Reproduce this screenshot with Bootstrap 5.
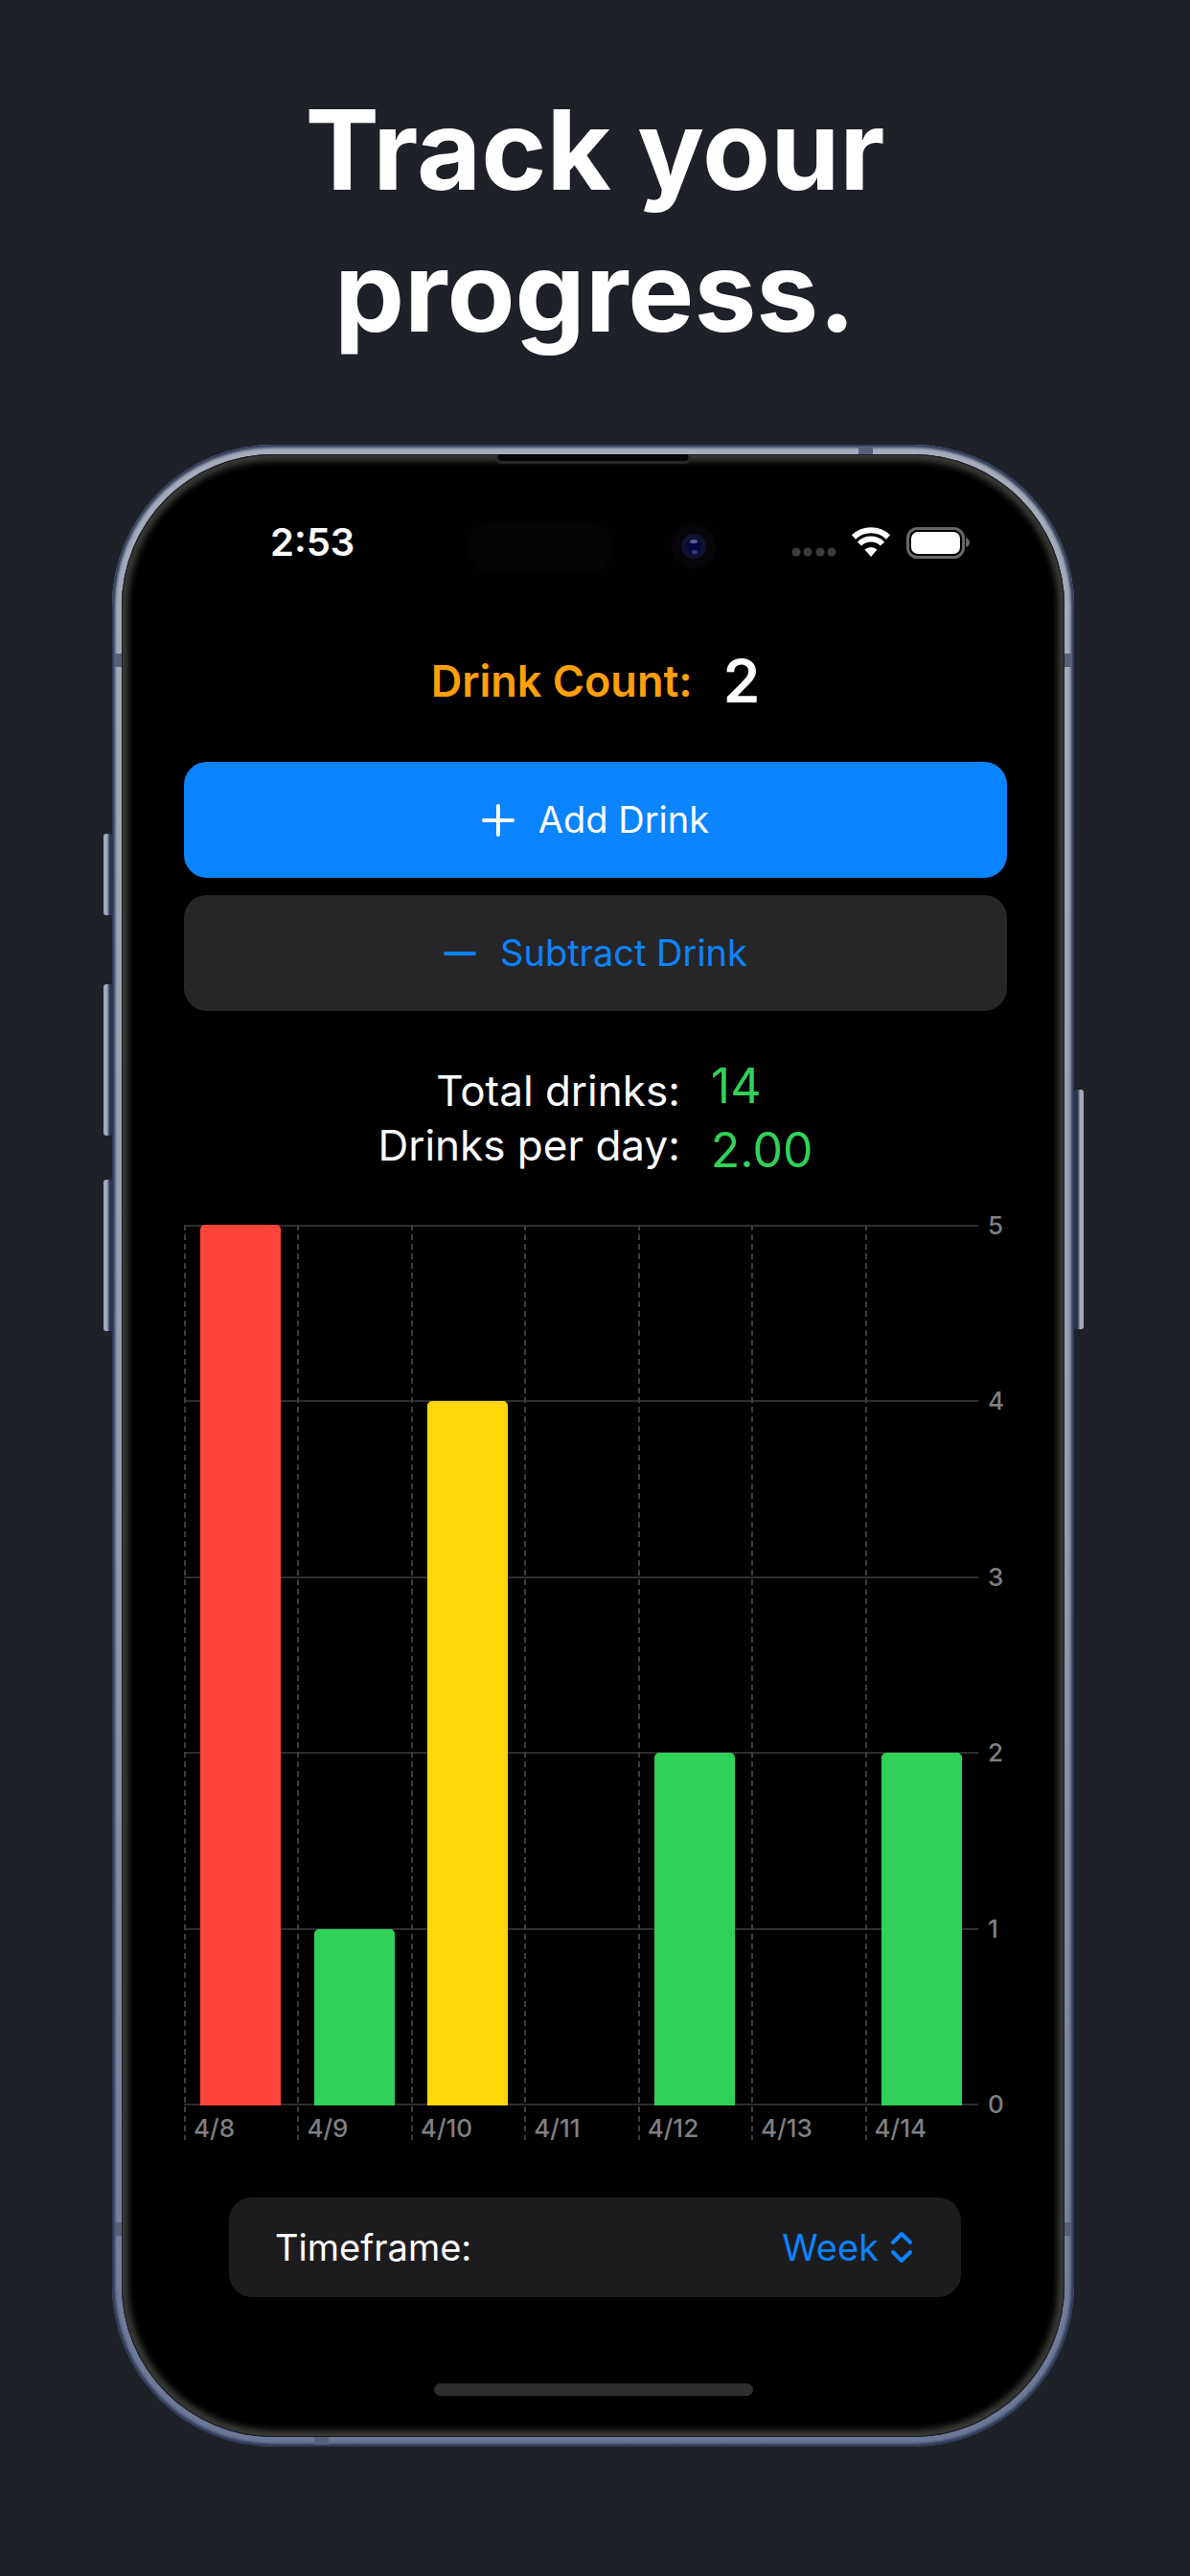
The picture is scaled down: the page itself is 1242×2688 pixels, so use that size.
<!DOCTYPE html>
<html lang="en">
<head>
<meta charset="utf-8">
<meta name="viewport" content="width=device-width, initial-scale=1">
<title>Track your progress.</title>
<link rel="stylesheet" href="https://cdn.jsdelivr.net/npm/bootstrap@5.3.0/dist/css/bootstrap.min.css">
<style>
  body { background: #1e2128; color: #fff; font-family: Inter, "Liberation Sans", sans-serif; }
  .headline { font-size: 116px; line-height: 148px; font-weight: 700; padding: 82px 0 86px; }
  .stage { padding: 0 121px 135px 117px; }

  /* Device shell */
  .phone { padding: 10px; border-radius: 168px; background: linear-gradient(#a6acba, #959cb0 50%, #6c7796); box-shadow: inset 0 0 3px 3px #2c3756; }
  .screen { border-radius: 158px; background: #000; box-shadow: inset 0 0 0 1px #1c1e26, inset 0 0 6px 7px #3a3a37; padding-bottom: 43px; }
  .side-key { width: 10px; border-radius: 3px; background: linear-gradient(90deg, #a2a9b8 35%, #2c3550 65%); }
  .key-action { left: -9px; top: 406px; height: 85px; }
  .key-up { left: -9px; top: 563px; height: 158px; }
  .key-down { left: -9px; top: 767px; height: 158px; }
  .key-power { right: -10px; top: 673px; height: 250px; background: linear-gradient(270deg, #a2a9b8 35%, #2c3550 65%); }
  .antenna { background: #566079; }
  .antenna-side { width: 7px; height: 14px; }
  .antenna-edge { width: 15px; height: 8px; }
  .from-left { left: 3px; }
  .from-right { right: 3px; }
  .near-top { top: 218px; }
  .near-bottom { bottom: 220px; }
  .edge-top { top: 2px; right: 210px; }
  .edge-bottom { bottom: 2px; left: 211px; }
  .speaker { top: 0; width: 204px; height: 10px; background: #050505; border: 3px solid #262625; border-top: 0; border-radius: 0 0 6px 6px; }
  .island { top: 55px; }

  .status { padding: 68px 99px 0 155px; height: 116px; }
  .clock { font-size: 40px; line-height: 48px; font-weight: 600; }
  .content { padding: 0 60px 0 65px; }

  .count-row { gap: 32px; margin-top: 83px; height: 76px; }
  .count-label { font-size: 45px; font-weight: 600; color: #ff9f0a; }
  .count-value { font-size: 62px; line-height: 76px; font-weight: 600; }
  .action-list { gap: 18px; margin-top: 46px; }
  .btn-action { height: 121px; border: 0; border-radius: 24px; font-size: 38px; gap: 25px; }
  .btn-add, .btn-add:hover { background: #0a84ff; color: #fff; }
  .btn-subtract, .btn-subtract:hover { background: #262628; color: #0a84ff; }

  .stats { gap: 32px; margin-top: 45px; }
  .stat-labels { font-size: 44px; line-height: 57px; }
  .stat-values { font-size: 50px; line-height: 67px; color: #30d158; }

  .chart { margin-top: 44px; font-size: 26px; font-weight: 500; line-height: 36px; color: #7f7f84; }
  .plot-height { height: 919px; }
  .rule-line { height: 2px; background: #2e2e30; }
  .day { flex: 1 1 0; background: repeating-linear-gradient(#3c3c3e 0 6px, transparent 6px 10px) left top / 2px 100% no-repeat; }
  .day-bar { width: 71%; border-radius: 5px 5px 0 0; }
  .bar-high { background: #ff453a; }
  .bar-mid { background: #ffd60a; }
  .bar-low { background: #30d158; }
  .day-name { height: 36px; padding: 6px 0 0 10px; line-height: 36px; }
  .scale { width: 30px; padding-left: 10px; }
  .scale span { height: 2px; line-height: 2px; }

  .timeframe { margin: 60px 48px 0 47px; height: 104px; border-radius: 24px; background: #1c1c1e; padding: 0 50px 0 48px; font-size: 38px; }
  .timeframe select { appearance: none; border: 0; background: transparent; color: #0a84ff; width: 180px; text-align-last: right; padding: 0; font-size: 38px; line-height: 48px; }
  .home-bar { width: 333px; height: 13px; border-radius: 7px; background: #2e2e2e; margin-top: 90px; }
</style>
<script src="https://cdn.jsdelivr.net/npm/bootstrap@5.3.0/dist/js/bootstrap.bundle.min.js"></script>
</head>
<body>
<h1 class="headline text-center mb-0">Track your<br>progress.</h1>

<main class="stage">
  <div class="phone position-relative">
    <i class="side-key key-action position-absolute"></i>
    <i class="side-key key-up position-absolute"></i>
    <i class="side-key key-down position-absolute"></i>
    <i class="side-key key-power position-absolute"></i>
    <i class="antenna antenna-side from-left near-top position-absolute"></i>
    <i class="antenna antenna-side from-right near-top position-absolute"></i>
    <i class="antenna antenna-side from-left near-bottom position-absolute"></i>
    <i class="antenna antenna-side from-right near-bottom position-absolute"></i>
    <i class="antenna antenna-edge edge-top position-absolute"></i>
    <i class="antenna antenna-edge edge-bottom position-absolute"></i>

    <div class="screen position-relative">
      <i class="speaker position-absolute start-50 translate-middle-x"></i>
      <svg class="island position-absolute start-50 translate-middle-x" width="290" height="84" viewBox="0 0 290 84" aria-hidden="true">
        <rect x="1" y="1" width="288" height="82" rx="41" fill="#010101"/>
        <rect x="15" y="16" width="150" height="52" rx="24" fill="#040404"/>
        <circle cx="250" cy="41" r="23" fill="#07050a"/>
        <circle cx="250" cy="41" r="13" fill="#11122f"/>
        <circle cx="250" cy="41" r="8" fill="#070840"/>
        <ellipse cx="250" cy="36" rx="4" ry="2" fill="#5a608e"/>
        <ellipse cx="251" cy="47" rx="3" ry="2" fill="#343a78"/>
      </svg>

      <div class="status d-flex justify-content-between align-items-center">
        <span class="clock">2:53</span>
        <svg width="186" height="36" viewBox="0 0 186 36" aria-hidden="true">
          <g fill="#3c3c3c"><circle cx="5" cy="28" r="4.500"/><circle cx="17" cy="28" r="4.500"/><circle cx="30" cy="28" r="4.500"/><circle cx="42" cy="28" r="4.500"/></g>
          <g fill="none" stroke="#fff" stroke-width="6">
            <path d="M65 12.500a26 26 0 0 1 36 0"/>
            <path d="M71 19.500a17 17 0 0 1 24 0"/>
          </g>
          <path d="M76.500 25.500a9.500 9.500 0 0 1 13 0l-6.500 7.500z" fill="#fff"/>
          <rect x="121.500" y="3.500" width="58" height="30" rx="10" fill="none" stroke="#666" stroke-width="3"/>
          <rect x="125" y="7" width="51" height="23" rx="7" fill="#fff"/>
          <path d="M182 13q4 1.500 4 5t-4 5z" fill="#666"/>
        </svg>
      </div>

      <div class="content">
        <div class="count-row d-flex justify-content-center align-items-center">
          <span class="count-label">Drink Count:</span>
          <span class="count-value">2</span>
        </div>

        <div class="action-list d-grid">
          <button type="button" class="btn btn-action btn-add d-flex justify-content-center align-items-center">
            <svg width="34" height="34" viewBox="0 0 34 34" fill="none" stroke="currentColor" stroke-width="4" stroke-linecap="round" aria-hidden="true"><path d="M17 2v30M2 17h30"/></svg>
            Add Drink
          </button>
          <button type="button" class="btn btn-action btn-subtract d-flex justify-content-center align-items-center">
            <svg width="34" height="34" viewBox="0 0 34 34" fill="none" stroke="currentColor" stroke-width="4" stroke-linecap="round" aria-hidden="true"><path d="M2 17h30"/></svg>
            Subtract Drink
          </button>
        </div>

        <div class="stats d-flex justify-content-center align-items-center">
          <div class="stat-labels text-end"><div>Total drinks:</div><div>Drinks per day:</div></div>
          <div class="stat-values"><div>14</div><div>2.00</div></div>
        </div>

        <div class="chart d-flex">
          <div class="flex-fill position-relative">
            <div class="plot-height position-absolute top-0 start-0 w-100 d-flex flex-column justify-content-between">
              <div class="rule-line"></div><div class="rule-line"></div><div class="rule-line"></div>
              <div class="rule-line"></div><div class="rule-line"></div><div class="rule-line"></div>
            </div>
            <div class="d-flex position-relative">
              <div class="day"><div class="plot-height d-flex align-items-end justify-content-center"><div class="day-bar bar-high" style="height:100%"></div></div><div class="day-name">4/8</div></div>
              <div class="day"><div class="plot-height d-flex align-items-end justify-content-center"><div class="day-bar bar-low" style="height:20%"></div></div><div class="day-name">4/9</div></div>
              <div class="day"><div class="plot-height d-flex align-items-end justify-content-center"><div class="day-bar bar-mid" style="height:80%"></div></div><div class="day-name">4/10</div></div>
              <div class="day"><div class="plot-height"></div><div class="day-name">4/11</div></div>
              <div class="day"><div class="plot-height d-flex align-items-end justify-content-center"><div class="day-bar bar-low" style="height:40%"></div></div><div class="day-name">4/12</div></div>
              <div class="day"><div class="plot-height"></div><div class="day-name">4/13</div></div>
              <div class="day"><div class="plot-height d-flex align-items-end justify-content-center"><div class="day-bar bar-low" style="height:40%"></div></div><div class="day-name">4/14</div></div>
            </div>
          </div>
          <div class="scale plot-height d-flex flex-column justify-content-between">
            <span>5</span><span>4</span><span>3</span><span>2</span><span>1</span><span>0</span>
          </div>
        </div>

        <div class="timeframe d-flex align-items-center">
          <label for="timeframe" class="me-auto">Timeframe:</label>
          <select id="timeframe">
            <option>Day</option><option selected>Week</option><option>Month</option><option>Year</option>
          </select>
          <svg class="ms-2" width="28" height="34" viewBox="0 0 28 34" fill="none" stroke="#0a84ff" stroke-width="4" stroke-linecap="round" stroke-linejoin="round" aria-hidden="true"><path d="M7 12l9-9 9 9M7 22l9 9 9-9"/></svg>
        </div>
      </div>
      <div class="home-bar mx-auto"></div>
    </div>
  </div>
</main>
</body>
</html>
